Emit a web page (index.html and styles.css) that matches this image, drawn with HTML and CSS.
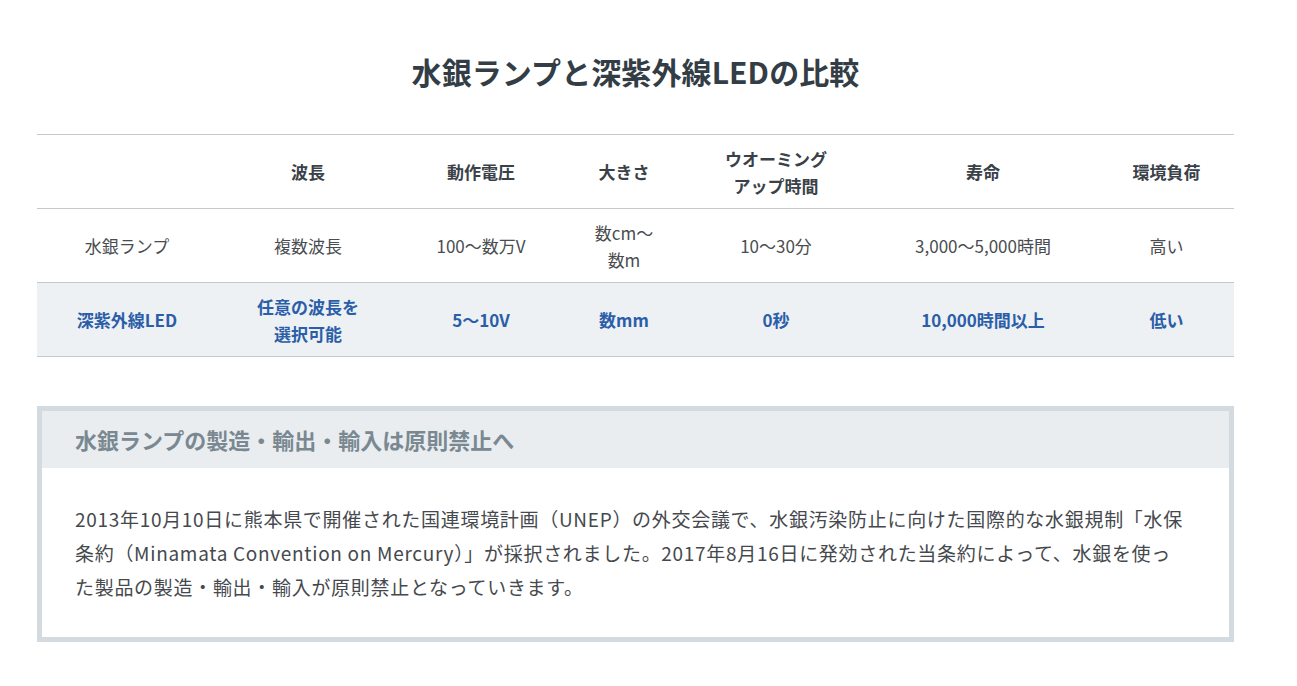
FILE: index.html
```html
<!DOCTYPE html>
<html lang="ja">
<head>
<meta charset="utf-8">
<title>水銀ランプと深紫外線LEDの比較</title>
<link rel="stylesheet" href="styles.css">
</head>
<body>
<main class="page">
  <h2 class="title">水銀ランプと深紫外線LEDの比較</h2>
  <table class="compare">
    <colgroup>
      <col class="c1"><col class="c2"><col class="c3"><col class="c4"><col class="c5"><col class="c6"><col class="c7">
    </colgroup>
    <thead>
      <tr>
        <th></th>
        <th>波長</th>
        <th>動作電圧</th>
        <th>大きさ</th>
        <th>ウオーミング<br>アップ時間</th>
        <th>寿命</th>
        <th>環境負荷</th>
      </tr>
    </thead>
    <tbody>
      <tr class="row-lamp">
        <td>水銀ランプ</td>
        <td>複数波長</td>
        <td>100～数万V</td>
        <td>数cm～<br>数m</td>
        <td>10～30分</td>
        <td>3,000～5,000時間</td>
        <td>高い</td>
      </tr>
      <tr class="row-led">
        <td>深紫外線LED</td>
        <td>任意の波長を<br>選択可能</td>
        <td>5～10V</td>
        <td>数mm</td>
        <td>0秒</td>
        <td>10,000時間以上</td>
        <td>低い</td>
      </tr>
    </tbody>
  </table>

  <section class="notice">
    <h3 class="notice-head">水銀ランプの製造・輸出・輸入は原則禁止へ</h3>
    <p class="notice-body">2013年10月10日に熊本県で開催された国連環境計画（UNEP）の外交会議で、水銀汚染防止に向けた国際的な水銀規制「水保条約（Minamata Convention on Mercury）」が採択されました。2017年8月16日に発効された当条約によって、水銀を使っ<br>た製品の製造・輸出・輸入が原則禁止となっていきます。</p>
  </section>
</main>
</body>
</html>
```

FILE: styles.css
```css
* { box-sizing: border-box; }
html, body { margin: 0; padding: 0; background: #fff; }
body {
  font-family: "Noto Sans CJK JP", "Noto Sans", sans-serif;
  color: #3d4246;
}
.page {
  width: 1197px;
  margin: 0 0 0 37px;
  padding-top: 48px;
}
.title {
  margin: 0 0 40px;
  text-align: center;
  font-size: 30px;
  font-weight: 700;
  line-height: 46px;
  color: #333d45;
  letter-spacing: 0.1px;
}
.compare {
  width: 1197px;
  border-collapse: collapse;
  table-layout: fixed;
  font-size: 17px;
  line-height: 27px;
}
.c1 { width: 180px; }
.c2 { width: 182px; }
.c3 { width: 164px; }
.c4 { width: 122px; }
.c5 { width: 182px; }
.c6 { width: 232px; }
.c7 { width: 135px; }
.compare th, .compare td {
  height: 74px;
  padding: 9px 4px;
  text-align: center;
  vertical-align: middle;
  border-top: 1px solid #c4c9cd;
  border-bottom: 1px solid #c4c9cd;
}
.compare th {
  font-weight: 700;
  color: #3a4148;
}
.row-lamp td {
  color: #4a4d50;
  font-weight: 400;
}
.row-led td {
  background: #eef1f4;
  color: #2b5ea8;
  font-weight: 700;
}
.notice {
  margin-top: 49px;
  border: 5px solid #d3dbe1;
  background: #fff;
}
.notice-head {
  margin: 0;
  background: #e9edf0;
  color: #7a8891;
  font-size: 22px;
  font-weight: 700;
  line-height: 57px;
  padding: 0 33px;
}
.notice-body {
  margin: 0;
  padding: 34px 33px 33px;
  font-size: 19px;
  line-height: 34px;
  color: #45494d;
  letter-spacing: 0.7px;
}
```
